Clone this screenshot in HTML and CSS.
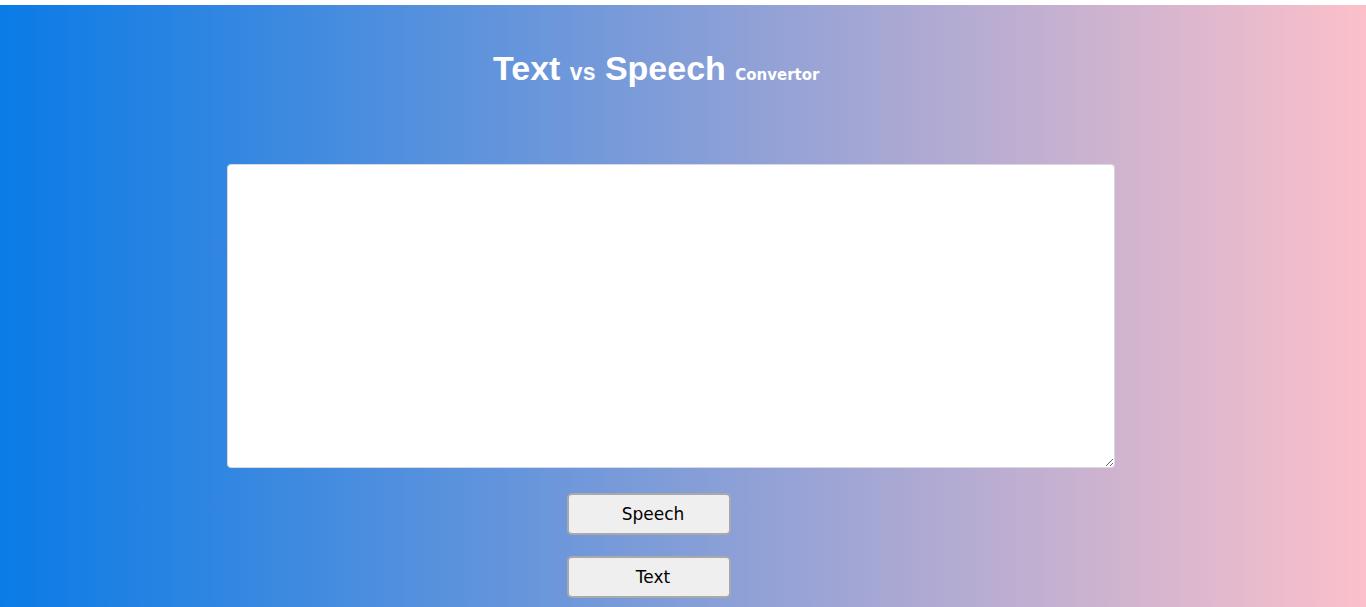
FILE: index.html
```html
<!DOCTYPE html>
<html lang="en">
<head>
<meta charset="utf-8">
<title>Text vs Speech Convertor</title>
<link rel="stylesheet" href="styles.css">
</head>
<body>
<div class="page">
  <h1 class="title">Text <span class="small">vs</span> Speech <span class="comic">Convertor</span></h1>
  <textarea class="input" autofocus></textarea>
  <button class="btn btn-first" type="button">Speech</button>
  <button class="btn" type="button">Text</button>
</div>
</body>
</html>
```
FILE: styles.css
```css
html, body {
  margin: 0;
  padding: 0;
  background: #ffffff;
  height: 100%;
  overflow: hidden;
}

body {
  padding-top: 5px;
  box-sizing: border-box;
}

.page {
  height: 602px;
  background: linear-gradient(to right, #0a7be6 0%, #fcc0ca 100%);
  display: flex;
  flex-direction: column;
  align-items: flex-start;
  padding-top: 43px;
  box-sizing: border-box;
}

.title {
  margin: 0 0 0 493px;
  font-family: "Liberation Sans", Arial, sans-serif;
  font-weight: bold;
  font-size: 34px;
  line-height: 40px;
  color: #ffffff;
  white-space: nowrap;
}

.small {
  font-size: 23px;
}

.comic {
  font-family: "DejaVu Sans", sans-serif;
  font-size: 15px;
  font-weight: bold;
}

.input {
  margin: 69px 0 0 227px;
  width: 888px;
  height: 304px;
  box-sizing: border-box;
  border: 1px solid #d8d8e0;
  border-radius: 4px;
  background: #ffffff;
  outline: none;
  padding: 2px;
  font-family: "Liberation Sans", Arial, sans-serif;
  font-size: 16px;
}

.btn {
  margin: 21px 0 0 567px;
  width: 164px;
  height: 42px;
  box-sizing: border-box;
  border: 2px solid #a9a9a9;
  border-radius: 5px;
  background: #efefef;
  color: #000000;
  font-family: "DejaVu Sans", sans-serif;
  font-size: 17px;
  padding: 0 0 0 8px;
}

.btn-first {
  margin-top: 25px;
}
```
